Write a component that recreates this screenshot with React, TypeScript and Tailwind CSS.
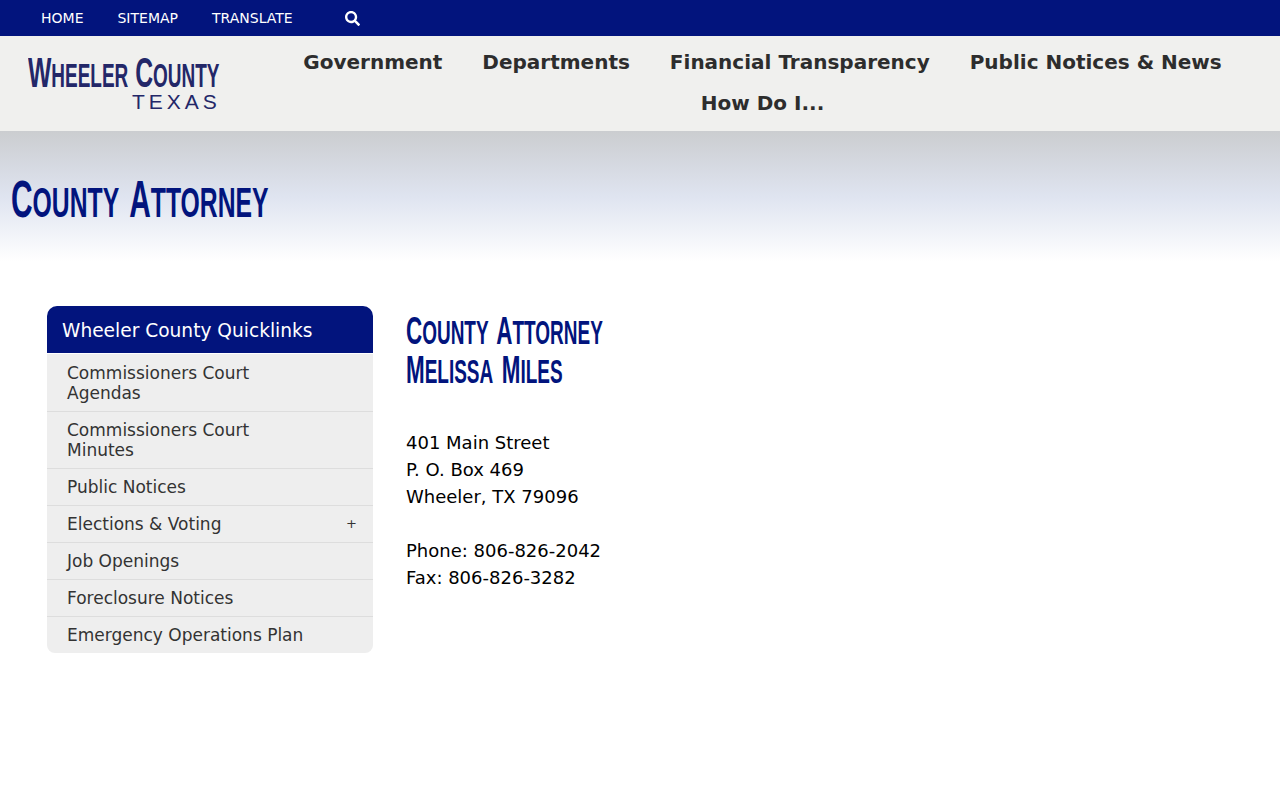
import { FaSearch } from 'react-icons/fa';

const topLinks = ['HOME', 'SITEMAP', 'TRANSLATE'];
const navLinks = ['Government', 'Departments', 'Financial Transparency', 'Public Notices & News', 'How Do I...'];

const quicklinks = [
  { label: 'Commissioners Court Agendas' },
  { label: 'Commissioners Court Minutes' },
  { label: 'Public Notices' },
  { label: 'Elections & Voting', expandable: true },
  { label: 'Job Openings' },
  { label: 'Foreclosure Notices' },
  { label: 'Emergency Operations Plan' },
];

// site's display face isn't installed: squeezed bold sans, first letters stay larger
function SmallCaps({ text, small }: { text: string; small: string }) {
  return (
    <>
      {text.split(' ').map((word, i) => (
        <span key={word}>
          {i > 0 && ' '}
          {word[0]}
          <span className={`${small} uppercase leading-none`}>{word.slice(1)}</span>
        </span>
      ))}
    </>
  );
}

const display = "font-['Liberation_Sans',sans-serif] font-bold origin-left whitespace-nowrap";

export default function App() {
  return (
    <div className="min-h-[800px] bg-white font-['DejaVu_Sans',sans-serif] overflow-hidden">
      {/* top bar */}
      <div className="flex h-9 items-center bg-[#02147d] pl-[41px] text-[14px] text-white">
        {topLinks.map((link) => (
          <a key={link} className="mr-[34px]">
            {link}
          </a>
        ))}
        <FaSearch className="ml-[18px] h-[15px] w-[15px]" />
      </div>

      {/* header */}
      <div className="flex h-[95px] bg-[#f0f0ee]">
        <div className="w-[270px] shrink-0 pl-7 pt-[16px] text-[#232768]">
          <div className={`${display} h-[40px] scale-x-[0.575] text-[43px] leading-[40px]`}>
            <SmallCaps text="Wheeler County" small="text-[33px]" />
          </div>
          <div className="ml-[104px] text-[21px] leading-[20px] font-['Liberation_Sans',sans-serif] tracking-[4px]">
            TEXAS
          </div>
        </div>
        <nav className="flex w-[985px] flex-wrap content-start justify-center pt-[6px] text-[20px] font-bold leading-[41px] text-[#2d2d2d]">
          {navLinks.map((link) => (
            <a key={link} className="px-5">
              {link}
            </a>
          ))}
        </nav>
      </div>

      {/* page banner */}
      <div className="h-[131px] bg-gradient-to-b from-[#cbcdd0] via-[#dfe4f0] to-white pl-[11px] pt-[38px]">
        <h1 className={`${display} scale-x-[0.575] text-[52px] leading-[60px] text-[#02147d] [word-spacing:5px]`}>
          <SmallCaps text="County Attorney" small="text-[43px]" />
        </h1>
      </div>

      {/* body */}
      <div className="flex pl-[47px] pt-[44px]">
        <aside className="w-[326px] shrink-0">
          <div className="flex h-[47px] items-center rounded-t-[10px] bg-[#02147d] pl-[15px] pt-[3px] text-[18.6px] text-white">
            Wheeler County Quicklinks
          </div>
          <ul className="mt-px rounded-b-[8px] bg-[#eeeeee] text-[17px] leading-[20px] text-[#333]">
            {quicklinks.map((item, i) => (
              <li
                key={item.label}
                className={`flex items-center justify-between pb-[8px] pl-5 pr-4 ${i > 0 ? 'border-t border-[#dddddd] pt-[8px]' : 'pt-[9px]'}`}
              >
                <span className="max-w-[240px]">{item.label}</span>
                {item.expandable && <span className="text-[13px] text-[#333]">+</span>}
              </li>
            ))}
          </ul>
        </aside>

        <main className="ml-[33px] pt-[5px]">
          <h2 className={`${display} scale-x-[0.575] text-[39px] leading-[39px] text-[#02147d] [word-spacing:4px]`}>
            <SmallCaps text="County Attorney" small="text-[33px]" />
            <br />
            <SmallCaps text="Melissa Miles" small="text-[33px]" />
          </h2>
          <div className="mt-[40px] text-[18px] leading-[27px] text-black">
            <p>401 Main Street</p>
            <p>P. O. Box 469</p>
            <p>Wheeler, TX 79096</p>
            <p className="mt-[27px]">Phone: 806-826-2042</p>
            <p>Fax: 806-826-3282</p>
          </div>
        </main>
      </div>
    </div>
  );
}
